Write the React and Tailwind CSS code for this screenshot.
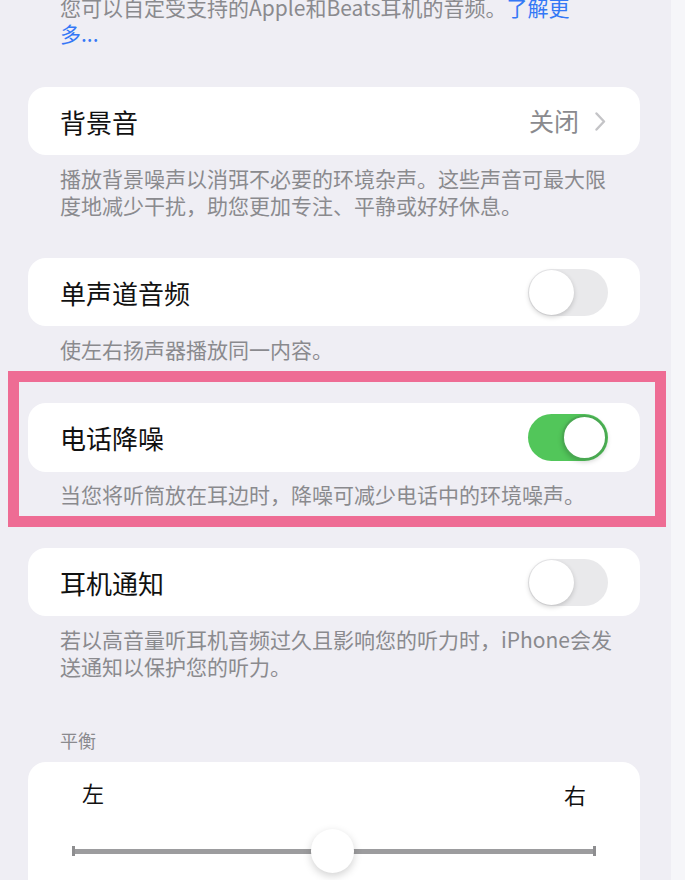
import React, { useState } from 'react';

const font = { fontFamily: '"Noto Sans CJK SC", "Noto Sans", sans-serif' };

// iOS style switch
const Toggle = ({ on, onChange }) => (
    <button
        onClick={() => onChange(!on)}
        className={`relative w-[80px] h-[47px] rounded-full shrink-0 ${on ? 'bg-[#52c65a]' : 'bg-[#e9e9eb]'}`}
    >
        <span
            className={`absolute top-[1px] w-[45px] h-[45px] rounded-full bg-white shadow-[0_2px_5px_rgba(0,0,0,0.18)] ${on ? 'right-[1px] border-2 border-[#4aa852]' : 'left-[1px]'}`}
        />
    </button>
);

const Card = ({ children, className = '' }) => (
    <div className={`ml-[28px] w-[612px] bg-white rounded-[18px] ${className}`}>{children}</div>
);

const Note = ({ children, className = '' }) => (
    <p className={`ml-[60px] text-[21px] leading-[27px] text-[#8a8a8e] ${className}`}>{children}</p>
);

const App = () => {
    const [mono, setMono] = useState(false);
    const [phoneNoise, setPhoneNoise] = useState(true);
    const [notify, setNotify] = useState(false);

    return (
        <div className="w-[685px] h-[880px] overflow-hidden flex bg-[#efeef4]" style={font}>
            <div className="relative w-[671px] shrink-0">
                {/* intro text, cut at the top */}
                <p className="ml-[60px] -mt-[6px] text-[21px] leading-[26px] text-[#8a8a8e]">
                    您可以自定受支持的Apple和Beats耳机的音频。<span className="text-[#3478f6]">了解更</span>
                    <br />
                    <span className="text-[#3478f6]">多...</span>
                </p>

                {/* 背景音 */}
                <Card className="mt-[41px] h-[68px] flex items-center justify-between pl-[32px] pr-[34px]">
                    <span className="text-[26px] text-[#111]">背景音</span>
                    <span className="flex items-center gap-[16px] text-[25px] text-[#8a8a8e]">
                        关闭
                        <svg width="11" height="19" viewBox="0 0 11 19" fill="none">
                            <path d="M1.5 1.5 L9 9.5 L1.5 17.5" stroke="#c4c4c7" strokeWidth="2.4" strokeLinecap="round" strokeLinejoin="round" />
                        </svg>
                    </span>
                </Card>
                <Note className="mt-[10px]">
                    播放背景噪声以消弭不必要的环境杂声。这些声音可最大限
                    <br />
                    度地减少干扰，助您更加专注、平静或好好休息。
                </Note>

                {/* 单声道音频 */}
                <Card className="mt-[39px] h-[68px] flex items-center justify-between pl-[32px] pr-[32px]">
                    <span className="text-[26px] text-[#111]">单声道音频</span>
                    <Toggle on={mono} onChange={setMono} />
                </Card>
                <Note className="mt-[10px]">使左右扬声器播放同一内容。</Note>

                {/* 电话降噪 */}
                <Card className="mt-[40px] h-[69px] flex items-center justify-between pl-[32px] pr-[32px]">
                    <span className="text-[26px] text-[#111]">电话降噪</span>
                    <Toggle on={phoneNoise} onChange={setPhoneNoise} />
                </Card>
                <Note className="mt-[9px]">当您将听筒放在耳边时，降噪可减少电话中的环境噪声。</Note>

                {/* 耳机通知 */}
                <Card className="mt-[40px] h-[68px] flex items-center justify-between pl-[32px] pr-[32px]">
                    <span className="text-[26px] text-[#111]">耳机通知</span>
                    <Toggle on={notify} onChange={setNotify} />
                </Card>
                <Note className="mt-[10px]">
                    若以高音量听耳机音频过久且影响您的听力时，iPhone会发
                    <br />
                    送通知以保护您的听力。
                </Note>

                {/* 平衡 */}
                <p className="ml-[60px] mt-[47px] text-[18px] leading-[26px] text-[#8a8a8e]">平衡</p>
                <Card className="mt-[9px] h-[160px] pt-[14px] px-[44px]">
                    <div className="flex justify-between px-[10px] text-[22px] text-[#111]">
                        <span>左</span>
                        <span className="mt-[2px]">右</span>
                    </div>
                    <div className="relative mt-[18px] h-[44px] flex items-center">
                        <div className="w-[3px] h-[10px] bg-[#8e8e90]" />
                        <div className="flex-1 h-[5px] bg-[#9c9c9e]" />
                        <div className="w-[3px] h-[10px] bg-[#8e8e90]" />
                        <span className="absolute left-[239px] top-0 w-[43px] h-[44px] rounded-full bg-white shadow-[0_3px_8px_rgba(0,0,0,0.18)]" />
                    </div>
                </Card>

                {/* annotation frame */}
                <div className="absolute left-[8px] top-[371px] w-[658px] h-[156px] border-[11px] border-[#ee6c94] pointer-events-none" />
            </div>
            <div className="w-[14px] bg-[#f6f6f9]" />
        </div>
    );
};

export default App;
